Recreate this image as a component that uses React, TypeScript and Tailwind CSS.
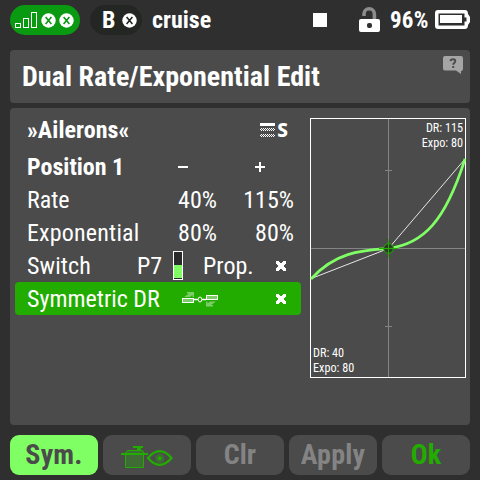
import type { ReactNode } from 'react';
import clsx from 'clsx';

const GRAPH = { w: 156, h: 260, cx: 78.5, cy: 130 };

/** Crossed-out round badge used for RF links and the bank switch. */
function CrossBadge({ color }: { color: string }) {
    return (
        <svg width="15" height="15" viewBox="0 0 15 15">
            <circle cx="7.5" cy="7.5" r="7.2" fill="#fff" />
            <path d="M4.600 4.100 10.400 10.900M10.400 4.100 4.600 10.900" stroke={color} strokeWidth="1.600" />
        </svg>
    );
}

function StatusBar() {
    return (
        <header className="flex h-[50px] pt-[5px] pl-[10px] font-bold text-white">
            <div className="flex h-[30px] w-[70px] items-center rounded-full bg-[#0a9a12] pl-[5px]">
                <svg width="22" height="16" viewBox="0 0 22 16" fill="none" stroke="#fff" className="mr-[4px]">
                    <rect x="0.5" y="11.5" width="5" height="4" />
                    <rect x="8.5" y="6.5" width="5" height="9" />
                    <rect x="16.5" y="0.5" width="5" height="15" />
                </svg>
                <CrossBadge color="#0a9a12" />
                <span className="w-[3px]" />
                <CrossBadge color="#0a9a12" />
            </div>
            <div className="ml-[10px] flex h-[30px] w-[52px] items-center rounded-full bg-[#242624] pl-[12px]">
                <span className="w-[20px] text-[24px] leading-[30px]">B</span>
                <CrossBadge color="#242624" />
            </div>
            <span className="ml-[10px] w-[161px] text-[24px] leading-[30px]">cruise</span>
            <span className="mt-[8px] size-[14px] bg-white" />
            <svg width="21" height="25" viewBox="0 0 21 25" className="mt-[2px] ml-[32px]">
                <path d="M5 9V7a5.200 5.200 0 0 1 10.400 0v6" fill="none" stroke="#8c8c8c" strokeWidth="3.600" />
                <rect y="12" width="21" height="13" rx="2" fill="#fff" />
                <rect x="8" y="16" width="5" height="5" rx="2" fill="#2f2f2f" />
            </svg>
            <span className="ml-[10px] w-[45px] text-[23px] leading-[31px] tracking-[0.2px]">96%</span>
            <svg width="35" height="19" viewBox="0 0 35 19" className="mt-[5px]">
                <path d="M3 0H30q3 0 3 4l2 3v5l-2 3q0 4-3 4H3q-3 0-3-3V3q0-3 3-3Z" fill="#fff" />
                <path d="M3.500 3.500h26v4h2v4h-2v4h-26Z" fill="#2f2f2f" />
                <rect x="5" y="5" width="22" height="8" fill="#fff" />
            </svg>
        </header>
    );
}

function HelpIcon() {
    return (
        <svg width="20" height="18" viewBox="0 0 20 18" className="mt-[6px] mr-[7px]">
            <path d="M2 0H18q2 0 2 2v11q0 2-2 2v3l-5-3.500H2q-2 0-2-2V2q0-2 2-2Z" fill="#a5a5a5" />
            <path d="M7.500 5.200q.2-2 2.500-2 2.300 0 2.300 1.900 0 1.200-1.200 2-.9.600-.9 1.700M10.200 10v2" fill="none" stroke="#4b4b4b" strokeWidth="1.900" />
        </svg>
    );
}

/** Virtual control list marker: one solid line over two dithered ones, then an S. */
function LinesS() {
    return (
        <span className="mr-[6px] flex h-[14px] w-[28px] items-center justify-between">
            <svg width="15" height="14" viewBox="0 0 15 14" shapeRendering="crispEdges">
                <defs>
                    <pattern id="dither" width="2" height="2" patternUnits="userSpaceOnUse">
                        <rect width="1" height="1" fill="#fff" />
                        <rect x="1" y="1" width="1" height="1" fill="#fff" />
                    </pattern>
                </defs>
                <rect width="15" height="3" fill="#fff" />
                <rect y="5" width="15" height="3" fill="url(#dither)" />
                <rect y="11" width="15" height="3" fill="url(#dither)" />
            </svg>
            <span className="font-['Noto_Sans',sans-serif] text-[19px] leading-[14px] font-extrabold [font-stretch:100%]">S</span>
        </span>
    );
}

function CrossMark() {
    return (
        <svg width="10" height="10" viewBox="0 0 10 10" shapeRendering="crispEdges">
            <path d="M0 0h3v1h1v1h2V1h1V0h3v3H9v1H8v2h1v1h1v3H7V9H6V8H4v1H3v1H0V7h1V6h1V4H1V3H0Z" fill="#fff" />
        </svg>
    );
}

function ServoPair() {
    return (
        <svg width="36" height="15" viewBox="0 0 36 15">
            <path d="M2 5 7 1.500H5V0h7v5h-1.500V3L8 5ZM34 9.500 29 13h2v1.500h-7v-5h1.500v2L28 9.500Z" fill="#7ccc68" />
            <path d="M12 7.500h4M20 7.500h4" stroke="#fff" strokeWidth="1.500" />
            <ellipse cx="18" cy="7.500" rx="1.800" ry="2.500" fill="#22ac00" stroke="#fff" />
            <rect x=".5" y="6.500" width="11" height="4" fill="#7ccc68" stroke="#fff" />
            <rect x="24.500" y="3.500" width="11" height="4" fill="#7ccc68" stroke="#fff" />
        </svg>
    );
}

interface RowProps {
    label: string;
    left?: ReactNode;
    right?: ReactNode;
    bold?: boolean;
    selected?: boolean;
    wide?: boolean;
}

function Row({ label, left, right, bold, selected, wide }: RowProps) {
    // text sits a touch lower than the icons
    const pad = (cell: ReactNode) => (typeof cell === 'string' ? 'pt-[2px]' : 'pt-[1px]');

    return (
        <div className={clsx('flex h-[33px] items-center rounded-[4px] pr-[7px] pl-[12px] leading-[33px]', bold && 'font-bold', selected && 'bg-[#22ac00]')}>
            <span className={clsx('flex-1 pt-[2px] whitespace-nowrap', wide && (bold ? 'tracking-[0.08px]' : 'tracking-[0.18px]'))}>{label}</span>
            <span className={clsx('flex items-center justify-end', pad(left))}>{left}</span>
            <span className={clsx('flex w-[77px] items-center justify-end', pad(right))}>{right}</span>
        </div>
    );
}

function Settings() {
    return (
        <section className="w-[286px] text-[24px] text-white">
            <div className="mt-[5px] mb-[4px]">
                <Row label="»Ailerons«" bold wide right={<LinesS />} />
            </div>
            <Row
                label="Position 1"
                bold
                left={<span className="mr-[29px] h-[2px] w-[10px] bg-white" />}
                right={
                    <svg width="10" height="10" viewBox="0 0 10 10" className="mr-[29px]">
                        <path d="M0 5h10M5 0v10" stroke="#fff" strokeWidth="2" />
                    </svg>
                }
            />
            <Row label="Rate" left="40%" right="115%" />
            <Row label="Exponential" wide left="80%" right="80%" />
            <div className="flex h-[33px] items-center pr-[15px] pl-[12px] leading-[33px]">
                <span className="w-[110px] pt-[2px] tracking-[0.1px]">Switch</span>
                <span className="w-[36px] pt-[2px]">P7</span>
                <span className="flex h-[29px] w-[10px] flex-col justify-end border border-white bg-[#2b2b2b] pb-[1px]">
                    <span className="h-[13px] bg-[#80ff64]" />
                </span>
                <span className="ml-[20px] flex-1 pt-[2px]">Prop.</span>
                <span className="flex pt-[1px]"><CrossMark /></span>
            </div>
            <Row
                label="Symmetric DR"
                selected
                left={<span className="-mr-px"><ServoPair /></span>}
                right={<span className="mr-[8px]"><CrossMark /></span>}
            />
        </section>
    );
}

function CurveGraph() {
    const { w, h, cx, cy } = GRAPH;
    return (
        <div className="relative mt-[10px] ml-[9px] h-[260px] w-[156px] text-[12.2px] leading-[15px] text-white">
            <svg width={w} height={h} viewBox={`0 0 ${w} ${h}`} fill="none">
                <path d={`M${cx} 0V${h}M0 ${cy + 0.5}H${w}M75 52.500h7M75 208.500h7`} stroke="#848484" />
                <path d={`M0 161 ${cx} ${cy + 0.5} ${w - 1} 41`} stroke="#e8e8e8" />
                <rect x="0.5" y="0.5" width={w - 1} height={h - 1} stroke="#fff" />
                <path d="M1 161C26 133.500 52 132.500 78.500 130.500C113 126 135 104 155 41" stroke="#80ff64" strokeWidth="2.700" />
                <circle cx={cx} cy={cy + 0.5} r="4.900" fill="#2b3b28" stroke="#22ac00" />
                <path d={`M${cx} 121v19M69 ${cy + 0.5}h19`} stroke="#22ac00" />
            </svg>
            <div className="absolute top-[3px] right-[3px] text-right">DR: 115<br />Expo: 80</div>
            <div className="absolute bottom-[2px] left-[3px]">DR: 40<br />Expo: 80</div>
        </div>
    );
}

function PotEye() {
    return (
        <svg width="52" height="23" viewBox="0 0 52 23" className="mt-[5px]">
            <path d="M4.500 8V7l2-2.500h15l1 1.500V21.500h-18Z" fill="#3f6b35" stroke="#22ac00" />
            <path d="M0 7h27v2H0ZM12 0h10v2H12ZM16 2h4v3h-4Z" fill="#22ac00" />
            <path d="M27 12Q38.700-1.800 50.500 12 38.700 25.800 27 12Z" fill="none" stroke="#22ac00" strokeWidth="2.300" />
            <circle cx="38.700" cy="12.200" r="4.700" fill="#3f6b35" />
            <circle cx="38.700" cy="12.200" r="2" fill="#22ac00" />
        </svg>
    );
}

function SoftKey({ children, className }: { children: ReactNode; className?: string }) {
    return (
        <button className={clsx('flex h-[40px] flex-1 items-center justify-center rounded-[9px] text-[28px] leading-[40px] font-bold', className)}>
            {children}
        </button>
    );
}

export default function App() {
    return (
        <main className="h-[480px] w-[480px] overflow-hidden bg-[#2f2f2f] font-['Roboto_Condensed',Roboto,sans-serif] [font-stretch:75%]">
            <StatusBar />
            <div className="mx-[10px] flex h-[53px] justify-between rounded-[4px] bg-[#4b4b4b] pl-[12px] text-white">
                <h1 className="text-[28px] leading-[53px] font-bold tracking-[0.04px]">Dual Rate/Exponential Edit</h1>
                <HelpIcon />
            </div>
            <div className="mx-[10px] mt-[5px] flex h-[317px] rounded-[4px] bg-[#4b4b4b] pl-[5px]">
                <Settings />
                <CurveGraph />
            </div>
            <nav className="mx-[10px] mt-[10px] flex gap-[5px]">
                <SoftKey className="bg-[#80ff64] tracking-[0.2px] text-[#4b4b4b]">Sym.</SoftKey>
                <SoftKey className="bg-[#4b4b4b]"><PotEye /></SoftKey>
                <SoftKey className="bg-[#4b4b4b] text-[#848484]">Clr</SoftKey>
                <SoftKey className="bg-[#4b4b4b] tracking-[0.2px] text-[#848484]">Apply</SoftKey>
                <SoftKey className="bg-[#4b4b4b] text-[#22ac00]">Ok</SoftKey>
            </nav>
        </main>
    );
}
